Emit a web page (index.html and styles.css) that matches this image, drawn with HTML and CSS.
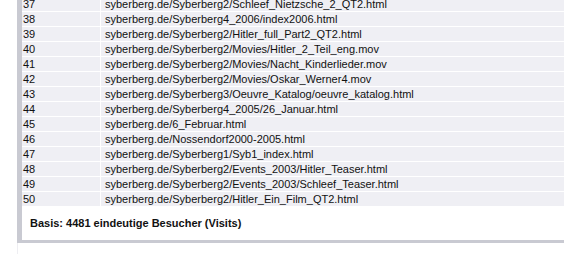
FILE: index.html
```html
<!DOCTYPE html>
<html>
<head>
<meta charset="utf-8">
<link rel="stylesheet" href="styles.css">
</head>
<body>
<div class="frame">
  <table class="stats">
    <tr><td class="num">37</td><td class="url">syberberg.de/Syberberg2/Schleef_Nietzsche_2_QT2.html</td></tr>
    <tr><td class="num">38</td><td class="url">syberberg.de/Syberberg4_2006/index2006.html</td></tr>
    <tr><td class="num">39</td><td class="url">syberberg.de/Syberberg2/Hitler_full_Part2_QT2.html</td></tr>
    <tr><td class="num">40</td><td class="url">syberberg.de/Syberberg2/Movies/Hitler_2_Teil_eng.mov</td></tr>
    <tr><td class="num">41</td><td class="url">syberberg.de/Syberberg2/Movies/Nacht_Kinderlieder.mov</td></tr>
    <tr><td class="num">42</td><td class="url">syberberg.de/Syberberg2/Movies/Oskar_Werner4.mov</td></tr>
    <tr><td class="num">43</td><td class="url">syberberg.de/Syberberg3/Oeuvre_Katalog/oeuvre_katalog.html</td></tr>
    <tr><td class="num">44</td><td class="url">syberberg.de/Syberberg4_2005/26_Januar.html</td></tr>
    <tr><td class="num">45</td><td class="url">syberberg.de/6_Februar.html</td></tr>
    <tr><td class="num">46</td><td class="url">syberberg.de/Nossendorf2000-2005.html</td></tr>
    <tr><td class="num">47</td><td class="url">syberberg.de/Syberberg1/Syb1_index.html</td></tr>
    <tr><td class="num">48</td><td class="url">syberberg.de/Syberberg2/Events_2003/Hitler_Teaser.html</td></tr>
    <tr><td class="num">49</td><td class="url">syberberg.de/Syberberg2/Events_2003/Schleef_Teaser.html</td></tr>
    <tr><td class="num">50</td><td class="url">syberberg.de/Syberberg2/Hitler_Ein_Film_QT2.html</td></tr>
  </table>
  <p class="basis">Basis: 4481 eindeutige Besucher (Visits)</p>
</div>
<div class="below"></div>
</body>
</html>
```

FILE: styles.css
```css
html, body {
  margin: 0;
  padding: 0;
  background: #ffffff;
  overflow: hidden;
}
body {
  font-family: "Liberation Sans", Arial, Helvetica, sans-serif;
  color: #111111;
}
.frame {
  margin-left: 17px;
  margin-top: -4px;
  border-left: 5px solid #c9cad2;
  border-bottom: 3px solid #c9cad2;
  background: #ffffff;
}
.stats {
  border-collapse: separate;
  border-spacing: 1px;
  margin-left: -1px;
  width: calc(100% + 2px);
  font-size: 11px;
}
.stats td {
  background: #efeff4;
  height: 14px;
  padding: 0;
  line-height: 14px;
  white-space: nowrap;
}
.stats .num {
  width: 77px;
  padding-left: 1px;
}
.stats .url {
  padding-left: 4px;
}
.basis {
  margin: 0;
  padding: 9px 0 10px 8px;
  font-size: 11px;
  font-weight: bold;
  line-height: 14px;
}
.below {
  margin-left: 17px;
  height: 20px;
  border-left: 1px solid #eeeef2;
}
```
